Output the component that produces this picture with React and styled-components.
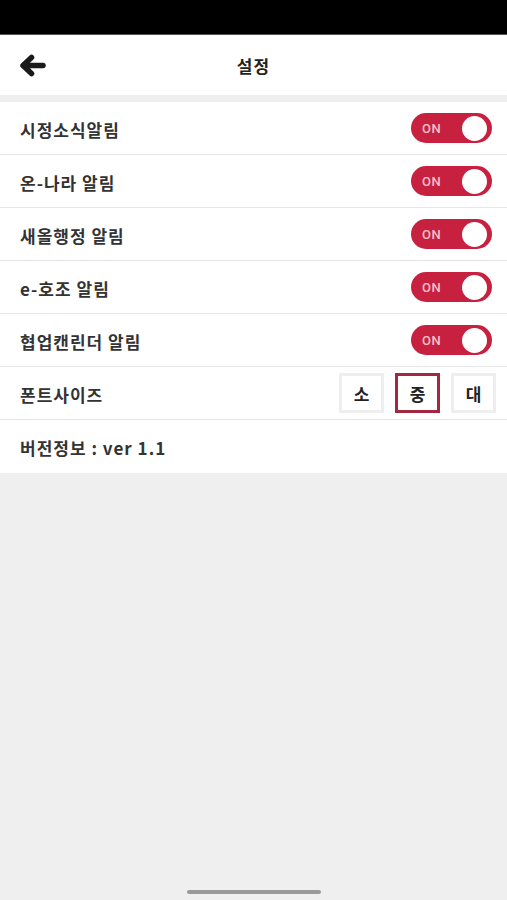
import React, { useState } from "react";
import styled, { createGlobalStyle } from "styled-components";

const GlobalStyle = createGlobalStyle`
  html, body {
    margin: 0;
    padding: 0;
    background: #efefef;
    font-family: "Noto Sans CJK KR", "Noto Sans", sans-serif;
  }
`;

const alarms = [
  "시정소식알림",
  "온-나라 알림",
  "새올행정 알림",
  "e-호조 알림",
  "협업캔린더 알림",
];

const sizes = ["소", "중", "대"];

const BackArrow = () => (
  <svg width="27" height="23" viewBox="0 0 27 23" fill="none">
    <path
      d="M24 11.5H6M12.5 3.5L4 11.5L12.5 19.5"
      stroke="#1a1a1a"
      strokeWidth="5.5"
      strokeLinecap="round"
      strokeLinejoin="round"
    />
  </svg>
);

const App = () => {
  const [fontSize, setFontSize] = useState("중");

  return (
    <Screen>
      <GlobalStyle />
      <StatusBar />
      <Header>
        <BackButton>
          <BackArrow />
        </BackButton>
        <Title>설정</Title>
      </Header>
      <List>
        {alarms.map((label) => (
          <Row key={label}>
            <Label>{label}</Label>
            <Toggle>
              <span>ON</span>
              <Knob />
            </Toggle>
          </Row>
        ))}
        <Row>
          <Label>폰트사이즈</Label>
          <SizeGroup>
            {sizes.map((s) => (
              <SizeButton key={s} $active={fontSize === s} onClick={() => setFontSize(s)}>
                {s}
              </SizeButton>
            ))}
          </SizeGroup>
        </Row>
        <Row>
          <Label>버전정보 : ver 1.1</Label>
        </Row>
      </List>
      <Spacer />
      <HomeBar />
    </Screen>
  );
};

export default App;

const Screen = styled.div`
  width: 507px;
  height: 900px;
  display: flex;
  flex-direction: column;
  background: #efefef;
`;

const StatusBar = styled.div`
  height: 34px;
  background: #000;
  border-bottom: 1px solid #555;
`;

const Header = styled.div`
  height: 60px;
  background: #fff;
  display: flex;
  align-items: center;
  justify-content: center;
  position: relative;
  margin-bottom: 7px;
`;

const BackButton = styled.button`
  position: absolute;
  left: 19px;
  top: 19px;
  border: 0;
  padding: 0;
  background: none;
  display: flex;
`;

const Title = styled.h1`
  margin: 0;
  font-size: 17px;
  font-weight: 700;
  letter-spacing: 1px;
  color: #222;
`;

const List = styled.div`
  display: flex;
  flex-direction: column;
  gap: 1px;
  background: #e6e6e6;
`;

const Row = styled.div`
  height: 52px;
  background: #fff;
  display: flex;
  align-items: center;
  justify-content: space-between;
  padding: 0 11px 0 20px;

  &:last-child {
    height: 53px;
  }
`;

const Label = styled.span`
  font-size: 17px;
  font-weight: 700;
  letter-spacing: 1px;
  color: #333;
  padding-top: 2px;
`;

const Toggle = styled.div`
  width: 81px;
  height: 30px;
  border-radius: 15px;
  background: #c8203f;
  display: flex;
  align-items: center;
  justify-content: space-between;
  padding: 0 5px 0 11px;
  box-sizing: border-box;
  margin-right: 4px;

  span {
    color: #f3c1ca;
    font-family: "Roboto", "Noto Sans", sans-serif;
    font-size: 13px;
    font-weight: 500;
    letter-spacing: 0.5px;
  }
`;

const Knob = styled.div`
  width: 25px;
  height: 25px;
  border-radius: 50%;
  background: #fff;
`;

const SizeGroup = styled.div`
  display: flex;
  gap: 11px;
`;

const SizeButton = styled.button`
  width: 45px;
  height: 40px;
  box-sizing: border-box;
  background: #fff;
  border: ${(p) => (p.$active ? "3px solid #a2283f" : "3px solid #eeeeee")};
  font-family: "Noto Sans CJK KR", sans-serif;
  font-size: 17px;
  font-weight: 700;
  color: #222;
  padding: 0;
  cursor: pointer;
`;

const Spacer = styled.div`
  flex: 1;
`;

const HomeBar = styled.div`
  align-self: center;
  width: 134px;
  height: 4px;
  border-radius: 2px;
  background: #9a9a9a;
  margin-bottom: 6px;
`;
